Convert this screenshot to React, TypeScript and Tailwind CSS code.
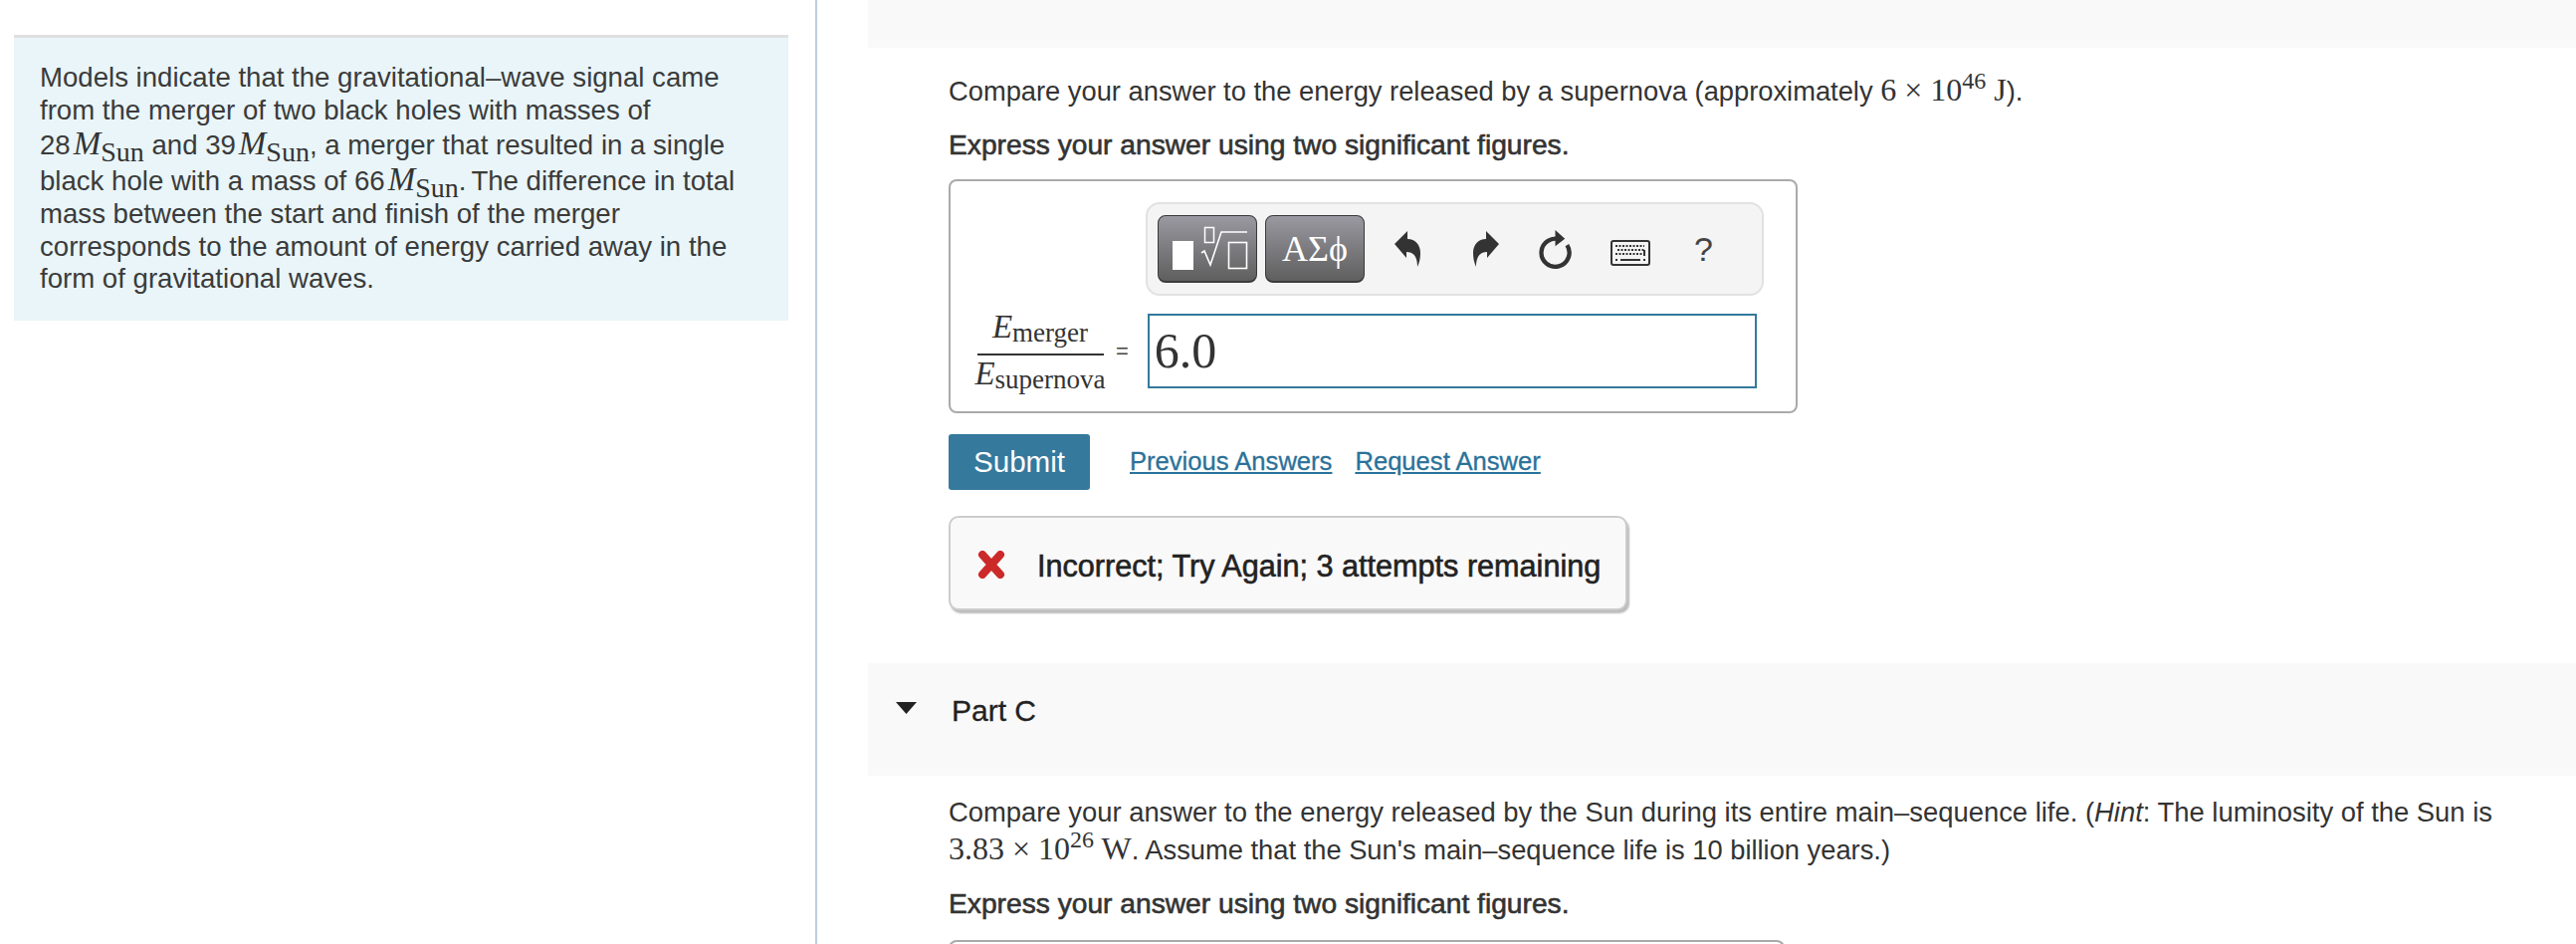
function MathVar({ name, sub }: { name: string; sub: string }) {
  return (
    <span className="ml-[3px] font-['Liberation_Serif',serif] leading-[35px] text-[#333]">
      <i className="text-[33px]">{name}</i>
      <sub className="text-[28px]">{sub}</sub>
    </span>
  )
}

function Serif({ children }: { children: React.ReactNode }) {
  return <span className="font-['Liberation_Serif',serif] text-[32px]">{children}</span>
}

function FractionTerm({ sub }: { sub: string }) {
  return (
    <>
      <i className="text-[33px]">E</i>
      <span className="relative top-[4px] text-[27px]">{sub}</span>
    </>
  )
}

function SqrtIcon() {
  return (
    <svg width="98" height="66" viewBox="0 0 98 66" fill="none">
      <rect x="14" y="25" width="21" height="29" fill="#fff" />
      <rect x="46.500" y="11.500" width="9" height="15" stroke="#fff" strokeWidth="1.500" />
      <path d="M43 37l3-2 6 14 11-33h26" stroke="#fff" strokeWidth="1.600" />
      <rect x="70.500" y="26.500" width="18" height="26" stroke="#fff" strokeWidth="1.600" />
    </svg>
  )
}

function ToolIcons() {
  return (
    <div className="flex items-center text-[#333]">
      <svg className="ml-[29px]" width="28" height="38" viewBox="0 0 28 38" fill="#333">
        <path d="M1 14L14 1v8c8 0 13 6 13 14 0 5-1 10-3 14 0-9-3-15-11-15v6z" />
      </svg>
      <svg className="ml-[51px]" width="28" height="38" viewBox="0 0 28 38" fill="#333">
        <path d="M27 14L14 1v8C6 9 1 15 1 23c0 5 1 10 3 14 0-9 3-15 11-15v6z" />
      </svg>
      <svg className="ml-[37px]" width="37" height="41" viewBox="0 0 34 38" fill="none">
        <path d="M22 10A13 13 0 1 0 28 15" stroke="#333" strokeWidth="4" />
        <path d="M17 1l9 8-9 7z" fill="#333" />
      </svg>
      <svg className="ml-[37px] mt-[8px]" width="40" height="26" viewBox="0 0 40 26" fill="none">
        <rect x="1" y="1" width="38" height="24" rx="2" stroke="#333" strokeWidth="2" />
        <path d="M5 6h29M7 10h27M5 14h27" stroke="#333" strokeWidth="2" strokeDasharray="2 1.500" />
        <path d="M10 20h20M5 20h2M33 20h2M34 10v6" stroke="#333" strokeWidth="2" />
      </svg>
      <span className="ml-[44px] font-['Liberation_Sans',sans-serif] text-[34px] leading-none text-[#444]">?</span>
    </div>
  )
}

function AnswerBox() {
  return (
    <div className="h-[235px] w-[853px] rounded-[8px] border-2 border-[#aaaaaa] bg-white">
      <div className="ml-[196px] mt-[21px] flex h-[94px] w-[621px] items-center rounded-[14px] border-2 border-[#e2e2e2] bg-[#f4f4f4] pl-[10px]">
        <div className="flex h-[68px] w-[100px] items-center justify-center rounded-[8px] border border-b-2 border-[#3a3a3a] bg-linear-to-b from-[#9a99a1] to-[#5f5f5f]">
          <SqrtIcon />
        </div>
        <div className="ml-[8px] flex h-[68px] w-[100px] items-center justify-center rounded-[8px] border border-b-2 border-[#3a3a3a] bg-linear-to-b from-[#9a99a1] to-[#5f5f5f] font-['Liberation_Serif',serif] text-[36px] text-white">
          ΑΣϕ
        </div>
        <ToolIcons />
      </div>
      <div className="mt-[14px] flex items-center">
        <div className="ml-[24px] flex w-[132px] flex-col items-center font-['Liberation_Serif',serif] text-[#333]">
          <div className="mb-[10px] h-[34px] whitespace-nowrap leading-[34px]">
            <FractionTerm sub="merger" />
          </div>
          <div className="h-[2px] w-[127px] bg-[#333]" />
          <div className="h-[36px] whitespace-nowrap leading-[36px]">
            <FractionTerm sub="supernova" />
          </div>
        </div>
        <span className="ml-[10px] text-[22px] text-[#444]">=</span>
        <div className="ml-[19px] flex h-[75px] w-[612px] items-center border-2 border-[#35799c] pl-[5px] font-['Liberation_Serif',serif] text-[50px] text-[#333]">
          6.0
        </div>
      </div>
    </div>
  )
}

export default function App() {
  return (
    <div className="flex h-[948px] w-[2588px] overflow-hidden bg-white font-['Liberation_Sans',sans-serif] text-[27.300px] text-[#333]">
      <aside className="w-[819px] shrink-0 pl-[14px] pt-[35px]">
        <div className="w-[778px] border-t-[3px] border-[#e0e0e0] bg-[#e9f5f8] pb-[25px] pl-[26px] pt-[24px] text-[#3b3b3b]">
          <p className="text-[27.600px] leading-[32.500px]">
            Models indicate that the gravitational–wave signal came
            <br />
            from the merger of two black holes with masses of
            <br />
            28<MathVar name="M" sub="Sun" /> and 39<MathVar name="M" sub="Sun" />, a merger that resulted in a single
            <br />
            black hole with a mass of 66<MathVar name="M" sub="Sun" />.<span className="ml-[5px]">The difference in total</span>
            <br />
            mass between the start and finish of the merger
            <br />
            corresponds to the amount of energy carried away in the
            <br />
            form of gravitational waves.
          </p>
        </div>
      </aside>
      <div className="h-full w-[2px] shrink-0 bg-[#bccddd]" />
      <main className="min-w-0 flex-1 pl-[51px]">
        <div className="h-[48px] bg-[#f9f9f9]" />
        <div className="pl-[81px]">
          <p className="mt-[24px] h-[36px] whitespace-nowrap leading-[36px]">
            Compare your answer to the energy released by a supernova (approximately <Serif>6 × 10<sup>46</sup> J</Serif>).
          </p>
          <p className="mt-[19px] h-[36px] text-[28.200px] leading-[36px] text-[#333] [-webkit-text-stroke:0.6px_#333]">Express your answer using two significant figures.</p>
          <div className="mt-[17px]">
            <AnswerBox />
          </div>
          <div className="mt-[21px] flex h-[56px] items-center">
            <button className="h-[56px] w-[142px] rounded-[3px] bg-[#35799c] text-[29.600px] text-white">Submit</button>
            <a className="ml-[40px] -mt-[2px] text-[25.600px] text-[#2a7299] underline [-webkit-text-stroke:0.3px_#2a7299]">Previous Answers</a>
            <a className="ml-[23px] -mt-[2px] text-[25.600px] text-[#2a7299] underline [-webkit-text-stroke:0.3px_#2a7299]">Request Answer</a>
          </div>
          <div className="mt-[26px] flex h-[95px] w-[682px] items-center rounded-[10px] border-2 border-[#cccccc] bg-[#f9f9f9] pl-[27px] shadow-[2px_3px_2px_#bbbbbb]">
            <svg className="mt-[2px]" width="28" height="28" viewBox="0 0 28 28" fill="none">
              <path d="M5 4l18 20M23 4L5 24" stroke="#cc2929" strokeWidth="8" strokeLinecap="round" />
            </svg>
            <span className="ml-[32px] mt-[6px] whitespace-nowrap text-[30.600px] text-[#222] [-webkit-text-stroke:0.6px_#222]">Incorrect; Try Again; 3 attempts remaining</span>
          </div>
        </div>
        <div className="mt-[53px] flex h-[113px] items-start bg-[#f9f9f9] pl-[28px] pt-[39px]">
          <svg width="21" height="12" viewBox="0 0 21 12" fill="#222">
            <path d="M0 0h21L10.500 12z" />
          </svg>
          <span className="ml-[35px] -mt-[9px] text-[30px] leading-[36px] text-[#222] [-webkit-text-stroke:0.3px_#222]">Part C</span>
        </div>
        <div className="pl-[81px]">
          <p className="mt-[19px] whitespace-nowrap leading-[36px]">
            <span className="text-[27.400px]">Compare your answer to the energy released by the Sun during its entire main–sequence life. (<i>Hint</i>: The luminosity of the Sun is</span>
            <br />
            <Serif>3.83 × 10<sup>26</sup> W</Serif>. Assume that the Sun's main–sequence life is 10 billion years.)
          </p>
          <p className="mt-[17px] h-[36px] text-[28.200px] leading-[36px] [-webkit-text-stroke:0.6px_#333]">Express your answer using two significant figures.</p>
          <div className="mt-[19px] h-[20px] w-[840px] rounded-t-[8px] border-2 border-b-0 border-[#aaaaaa]" />
        </div>
      </main>
    </div>
  )
}
